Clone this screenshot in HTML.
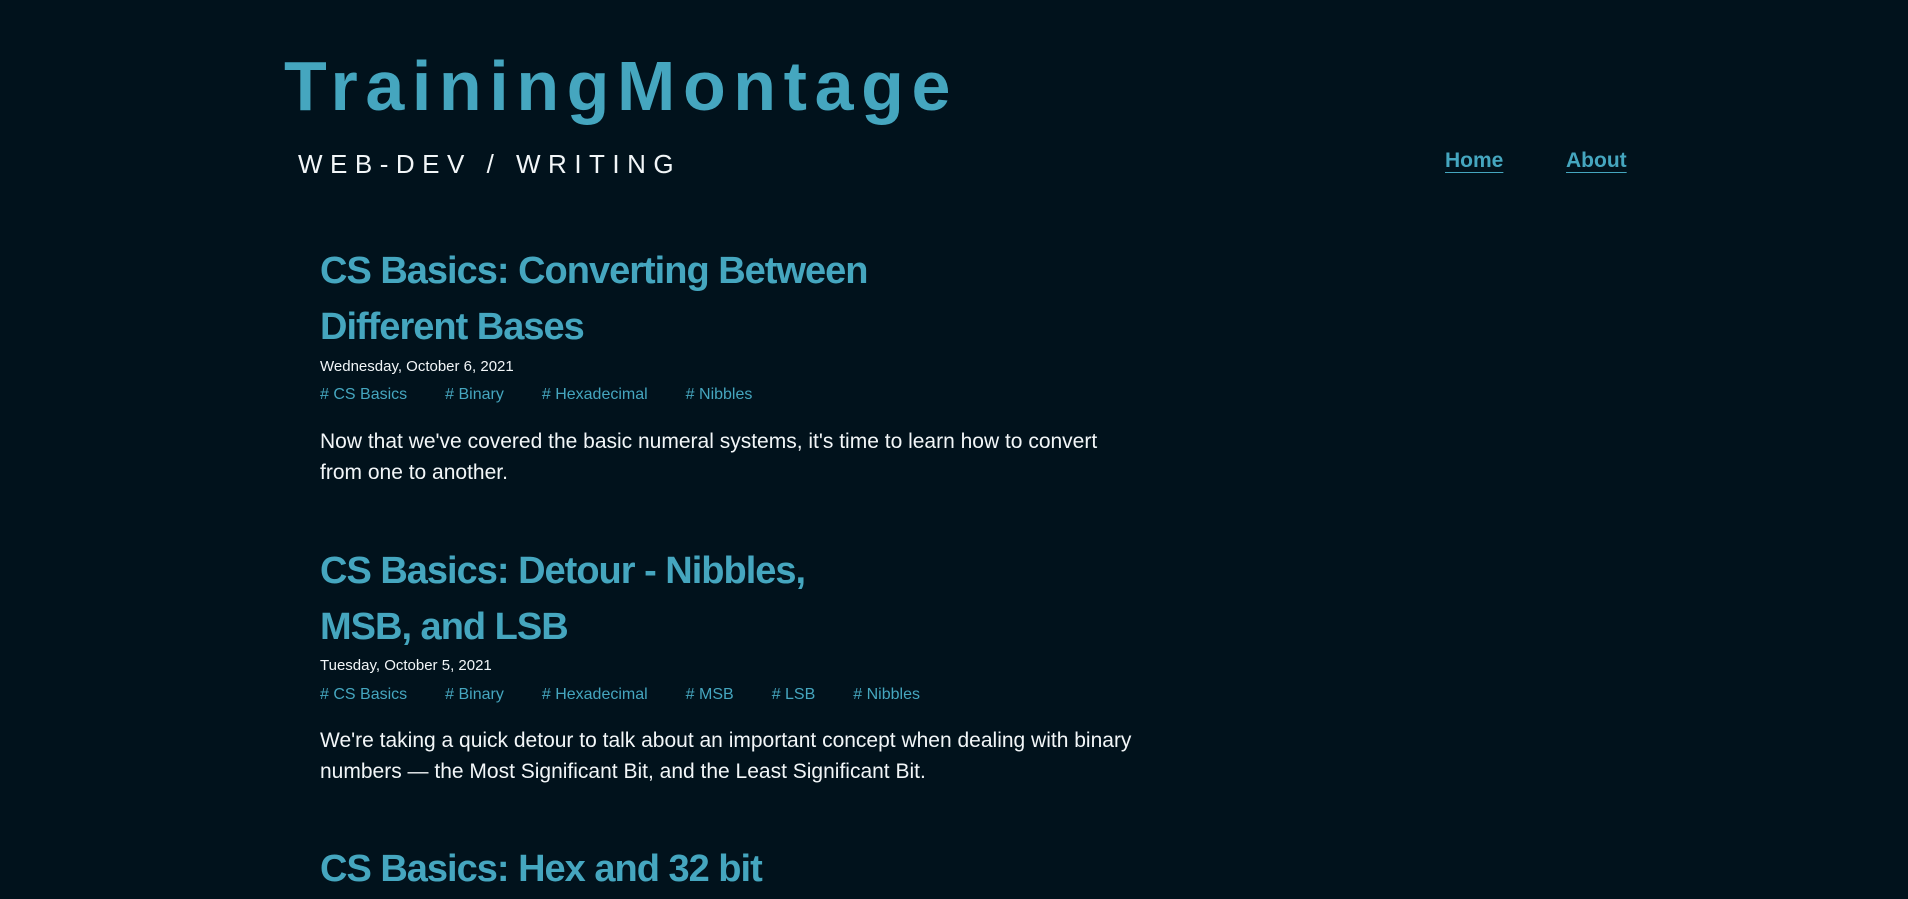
<!DOCTYPE html>
<html><head><meta charset="utf-8"><style>
html,body{margin:0;padding:0;background:#01121c;width:1908px;height:899px;overflow:hidden;font-family:"Liberation Sans",sans-serif}
.a{position:absolute;line-height:1;white-space:nowrap}
.logo{left:284px;top:51px;font-size:70px;font-weight:bold;color:#45a6bf;letter-spacing:7.6px}
.sub{left:298px;top:151px;font-size:26px;color:#f2f6f8;letter-spacing:7.5px}
.nav{top:150px;font-size:21px;font-weight:bold;color:#45a6bf;text-decoration:underline;text-underline-offset:5px;text-decoration-thickness:1px}
.t{left:320px;font-size:38px;font-weight:bold;color:#45a6bf;letter-spacing:-1px}
.d{left:320px;font-size:15px;color:#f2f6f8}
.tags{left:320px;font-size:16px;color:#45a6bf;display:flex;gap:38px}
.b{left:320px;font-size:21px;color:#f2f6f8}
</style></head><body>
<div class="a logo">TrainingMontage</div>
<div class="a sub">WEB-DEV / WRITING</div>
<div class="a nav" style="left:1445px">Home</div>
<div class="a nav" style="left:1566px">About</div>

<div class="a t" style="top:252px">CS Basics: Converting Between</div>
<div class="a t" style="top:308px">Different Bases</div>
<div class="a d" style="top:359px">Wednesday, October 6, 2021</div>
<div class="a tags" style="top:387px"><span># CS Basics</span><span># Binary</span><span># Hexadecimal</span><span># Nibbles</span></div>
<div class="a b" style="top:431px">Now that we've covered the basic numeral systems, it's time to learn how to convert</div>
<div class="a b" style="top:462px">from one to another.</div>

<div class="a t" style="top:552px">CS Basics: Detour - Nibbles,</div>
<div class="a t" style="top:608px">MSB, and LSB</div>
<div class="a d" style="top:658px">Tuesday, October 5, 2021</div>
<div class="a tags" style="top:687px"><span># CS Basics</span><span># Binary</span><span># Hexadecimal</span><span># MSB</span><span># LSB</span><span># Nibbles</span></div>
<div class="a b" style="top:730px">We're taking a quick detour to talk about an important concept when dealing with binary</div>
<div class="a b" style="top:761px">numbers — the Most Significant Bit, and the Least Significant Bit.</div>

<div class="a t" style="top:850px">CS Basics: Hex and 32 bit</div>
</body></html>
